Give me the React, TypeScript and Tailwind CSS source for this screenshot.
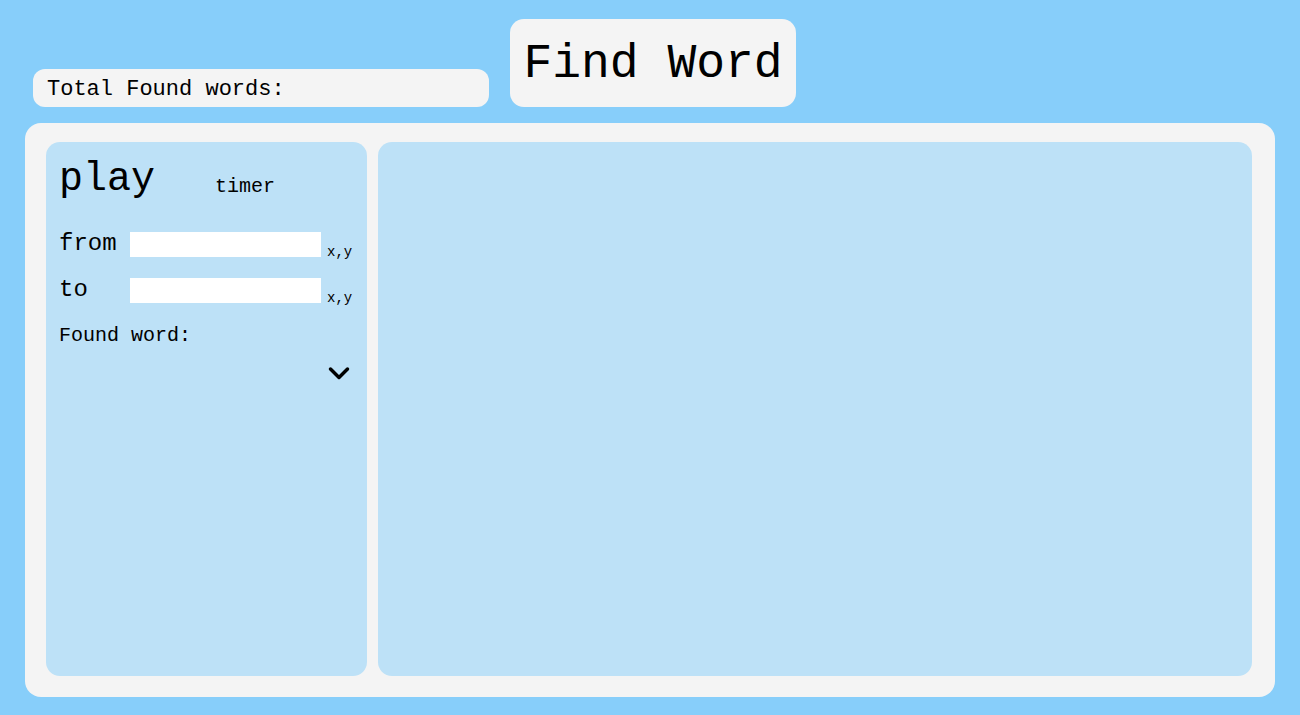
import { useState } from 'react'

function CoordRow({ label, value, onChange }: { label: string; value: string; onChange: (v: string) => void }) {
  return (
    <div className="flex items-end">
      <span className="w-[71px] shrink-0 text-[24px] leading-[normal]">{label}</span>
      <input
        value={value}
        onChange={e => onChange(e.target.value)}
        className="h-[25px] w-[191px] shrink-0 bg-white px-1 text-[14px] outline-none"
      />
      <span className="ml-[6px] shrink-0 text-[14px] leading-[10px]">x,y</span>
    </div>
  )
}

export default function App() {
  const [from, setFrom] = useState('')
  const [to, setTo] = useState('')

  return (
    <div className="h-[715px] w-full bg-[#87cefa] text-black font-['Liberation_Mono','Courier_New',monospace] overflow-hidden">
      <div className="flex items-end gap-[21px] pl-[33px] pt-[19px]">
        <div className="flex h-[38px] w-[456px] items-center rounded-[12px] bg-[#f4f4f4] pl-[14px] pt-[3px] text-[22px]">
          Total Found words:
        </div>
        <div className="flex h-[88px] w-[286px] items-center justify-center rounded-[14px] bg-[#f4f4f4] pt-[2px] text-[48px]">
          Find Word
        </div>
      </div>

      <div className="mx-[25px] mt-[16px] flex h-[574px] gap-[11px] rounded-[16px] bg-[#f4f4f4] pb-[21px] pl-[21px] pr-[23px] pt-[19px]">
        <div className="flex w-[321px] shrink-0 flex-col rounded-[14px] bg-[#bde1f7] pl-[13px] pr-[12px] pt-[15px]">
          <div className="flex items-baseline">
            <span className="w-[156px] text-[40px] leading-[normal]">play</span>
            <span className="relative top-[2px] text-[20px]">timer</span>
          </div>
          <div className="mt-[28px]">
            <CoordRow label="from" value={from} onChange={setFrom} />
          </div>
          <div className="mt-[19px]">
            <CoordRow label="to" value={to} onChange={setTo} />
          </div>
          <div className="mt-[21px] text-[20px] leading-[normal]">Found word:</div>
          <div className="mt-[19px] flex justify-end pr-[5px]">
            <svg width="22" height="16" viewBox="0 0 22 16" fill="none">
              <polyline points="2.5,3 11,11.5 19.5,3" stroke="black" strokeWidth="3.5" strokeLinecap="round" strokeLinejoin="round" />
            </svg>
          </div>
        </div>
        <div className="flex-1 rounded-[14px] bg-[#bde1f7]" />
      </div>
    </div>
  )
}
